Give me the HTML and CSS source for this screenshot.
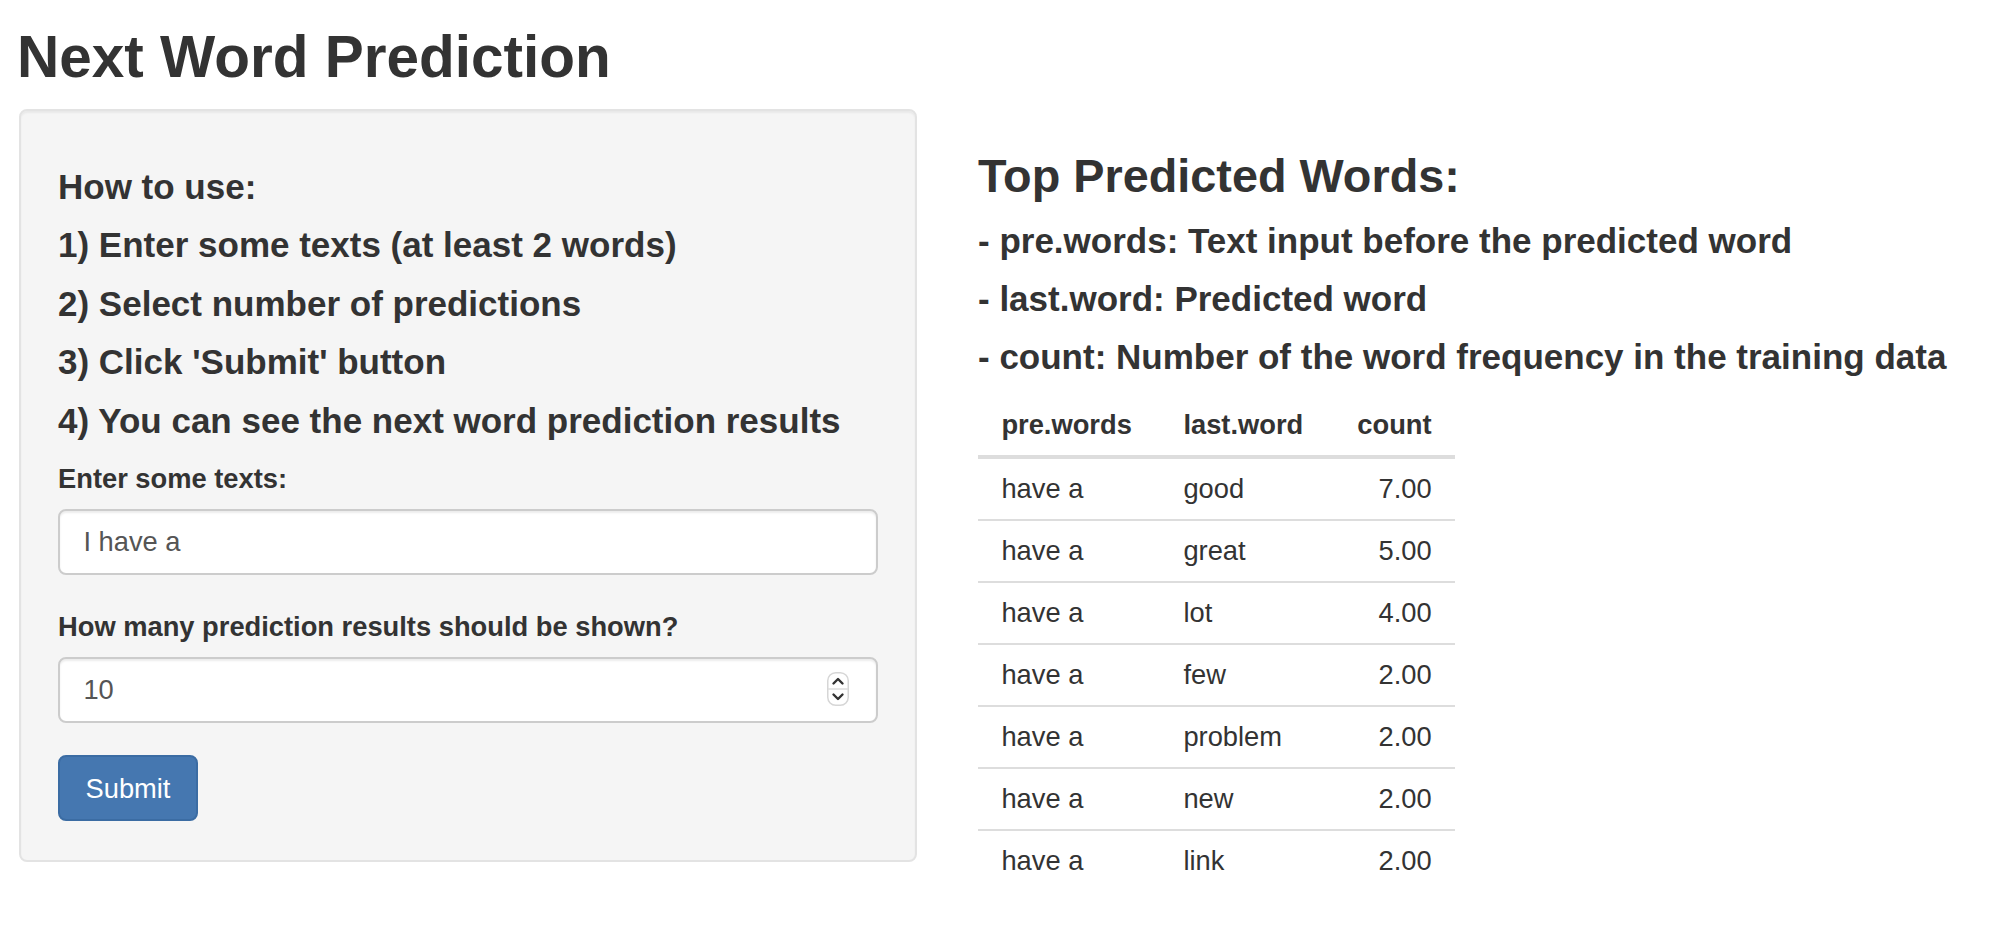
FILE: index.html
```html
<!DOCTYPE html>
<html lang="en">
<head>
<meta charset="utf-8">
<title>Next Word Prediction</title>
<link rel="stylesheet" href="styles.css">
</head>
<body>
<div class="page">
  <h2 class="title">Next Word Prediction</h2>
  <div class="row">
    <div class="well">
      <h4>How to use:</h4>
      <h4>1) Enter some texts (at least 2 words)</h4>
      <h4>2) Select number of predictions</h4>
      <h4>3) Click 'Submit' button</h4>
      <h4>4) You can see the next word prediction results</h4>
      <div class="form-group">
        <label class="control-label">Enter some texts:</label>
        <input class="form-control" type="text" value="I have a">
      </div>
      <div class="form-group">
        <label class="control-label">How many prediction results should be shown?</label>
        <div class="num-wrap">
          <input class="form-control" type="text" value="10">
          <span class="spinner">
            <svg width="22" height="34" viewBox="0 0 22 34">
              <rect x="0.75" y="0.75" width="20.5" height="32.5" rx="8" fill="#fff" stroke="#d6d6d6" stroke-width="1.5"/>
              <line x1="1" y1="17" x2="21" y2="17" stroke="#dcdcdc" stroke-width="1.5"/>
              <path d="M6.5 11.5 L11 7 L15.5 11.5" fill="none" stroke="#333" stroke-width="2.4" stroke-linecap="round" stroke-linejoin="round"/>
              <path d="M6.5 22.5 L11 27 L15.5 22.5" fill="none" stroke="#333" stroke-width="2.4" stroke-linecap="round" stroke-linejoin="round"/>
            </svg>
          </span>
        </div>
      </div>
      <button class="btn-primary" type="button">Submit</button>
    </div>
    <div class="main">
      <h3>Top Predicted Words:</h3>
      <h4>- pre.words: Text input before the predicted word</h4>
      <h4>- last.word: Predicted word</h4>
      <h4>- count: Number of the word frequency in the training data</h4>
      <table class="shiny-table">
        <colgroup>
          <col class="c1"><col class="c2"><col class="c3">
        </colgroup>
        <thead>
          <tr><th>pre.words</th><th>last.word</th><th class="num">count</th></tr>
        </thead>
        <tbody>
          <tr><td>have a</td><td>good</td><td class="num">7.00</td></tr>
          <tr><td>have a</td><td>great</td><td class="num">5.00</td></tr>
          <tr><td>have a</td><td>lot</td><td class="num">4.00</td></tr>
          <tr><td>have a</td><td>few</td><td class="num">2.00</td></tr>
          <tr><td>have a</td><td>problem</td><td class="num">2.00</td></tr>
          <tr><td>have a</td><td>new</td><td class="num">2.00</td></tr>
          <tr><td>have a</td><td>link</td><td class="num">2.00</td></tr>
        </tbody>
      </table>
    </div>
  </div>
</div>
</body>
</html>
```

FILE: styles.css
```css
html, body {
  margin: 0;
  padding: 0;
  background: #fff;
}
body {
  font-family: "Liberation Sans", Arial, Helvetica, sans-serif;
  font-size: 27.3px;
  line-height: 39px;
  color: #333;
}
.page {
  padding-left: 19px;
}
.title {
  margin: 25px 0 19.5px -2px;
  font-size: 58.5px;
  line-height: 64px;
  font-weight: bold;
}
.row {
  display: flex;
  align-items: flex-start;
  gap: 61px;
}
.well {
  flex: none;
  width: 898px;
  box-sizing: border-box;
  background: #f5f5f5;
  border: 2px solid #e3e3e3;
  border-radius: 8px;
  padding: 37px 37px 39px;
  box-shadow: inset 0 2px 2px rgba(0, 0, 0, 0.05);
}
h4 {
  font-size: 35px;
  line-height: 38.5px;
  margin: 19.5px 0;
  font-weight: bold;
}
.well h4 {
  line-height: 38.5px;
  margin: 20px 0 19px;
}
.form-group {
  margin-bottom: 32px;
}
.control-label {
  display: inline-block;
  font-weight: bold;
  margin-bottom: 11px;
}
.form-control {
  display: block;
  width: 100%;
  box-sizing: border-box;
  height: 66px;
  padding: 11.7px 23.4px;
  font-family: inherit;
  font-size: 27.3px;
  line-height: 39px;
  color: #555;
  background: #fff;
  border: 2px solid #ccc;
  border-radius: 8px;
  box-shadow: inset 0 2px 2px rgba(0, 0, 0, 0.075);
  outline: none;
}
.num-wrap {
  position: relative;
}
.spinner {
  position: absolute;
  right: 29px;
  top: 15px;
  width: 22px;
  height: 34px;
  display: block;
}
.spinner svg {
  display: block;
}
.btn-primary {
  display: inline-block;
  font-family: inherit;
  font-size: 27.3px;
  line-height: 39px;
  padding: 11.7px 25.5px;
  color: #fff;
  background: #4577b0;
  border: 2px solid #3b6ca3;
  border-radius: 8px;
  cursor: pointer;
}
.main {
  padding-top: 3px;
  min-width: 0;
}
h3 {
  font-size: 46.8px;
  line-height: 51.5px;
  margin: 39px 0 19.5px;
  font-weight: bold;
}
.shiny-table {
  border-collapse: collapse;
  table-layout: fixed;
  width: 477px;
  margin-top: -1px;
}
.c1 { width: 182px; }
.c2 { width: 171px; }
.c3 { width: 124px; }
.shiny-table th,
.shiny-table td {
  padding: 10.5px 23.4px;
  line-height: 39px;
  text-align: left;
  white-space: nowrap;
}
.shiny-table th {
  font-weight: bold;
  border-bottom: 4px solid #ddd;
}
.shiny-table td {
  border-top: 2px solid #ddd;
}
.shiny-table tbody tr:first-child td {
  border-top: 0;
}
.shiny-table .num {
  text-align: right;
}
```
